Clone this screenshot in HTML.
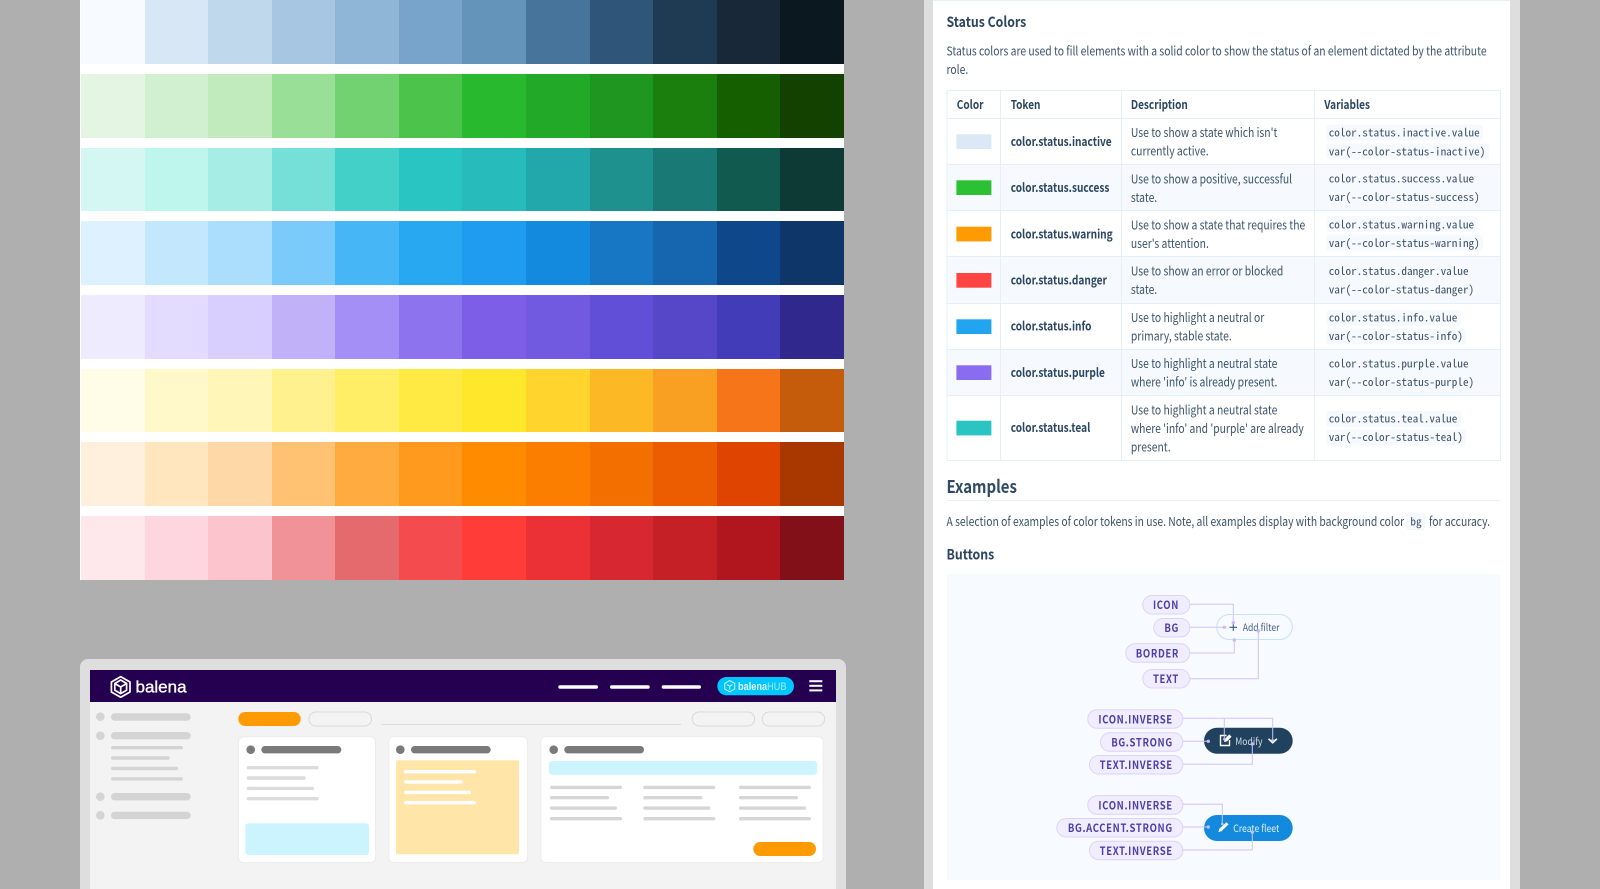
<!DOCTYPE html>
<html><head><meta charset="utf-8"><style>
html,body{margin:0;padding:0;width:1600px;height:889px;overflow:hidden;background:#b0afaf}
.r{position:absolute;left:81px;width:763px;height:63.6px;display:flex}
.r i{flex:1;display:block}
svg{position:absolute;left:0;top:0}
text{font-family:"Noto Sans CJK SC","Liberation Sans",sans-serif;fill:#3a536b;font-size:12.4px;transform-box:fill-box;transform-origin:0 50%;transform:scaleX(.835)}
.h{font-weight:700;font-size:12.2px;fill:#2a4560;transform:scaleX(.825)}
.t{font-weight:700;font-size:12.2px;fill:#2a4560;transform:scaleX(.83)}
.b{transform:scaleX(.855)}
.s{transform:scaleX(.865)}
.n{transform:none}
.c{font-family:"Noto Sans Mono CJK SC","Liberation Mono",monospace;font-size:11.2px;fill:#3c5269;transform:none}
.p{font-weight:700;font-size:11px;letter-spacing:.75px;fill:#4a3fa8;text-anchor:end;transform-origin:100% 50%;transform:scaleX(.865)}
.l{fill:none;stroke:#cfc2fb;stroke-width:1}
.pl{fill:#f1edff;stroke:#dcd2fb;stroke-width:1}
.d{fill:#c9b9fa}
.g{fill:#d4d4d4}.k{fill:#dcdcdc}.w{fill:#fff}.m{fill:#d6d6d6}.dk{fill:#7a7a7a}
</style></head><body>
<div style="position:absolute;left:80px;top:0;width:764px;height:580px;background:#fff"></div>
<div class="r" style="top:0"><i style="background:#f7fbff"></i><i style="background:#d8e7f5"></i><i style="background:#bfd8ec"></i><i style="background:#a6c6e1"></i><i style="background:#8fb5d7"></i><i style="background:#78a4cc"></i><i style="background:#6594ba"></i><i style="background:#47749a"></i><i style="background:#2f5578"></i><i style="background:#1f3b53"></i><i style="background:#182839"></i><i style="background:#0b1820"></i></div>
<div class="r" style="top:74px"><i style="background:#e4f6e3"></i><i style="background:#d0f0cf"></i><i style="background:#c1ebbd"></i><i style="background:#9adf98"></i><i style="background:#72d170"></i><i style="background:#4cc34b"></i><i style="background:#28b92f"></i><i style="background:#23a928"></i><i style="background:#1f961f"></i><i style="background:#1b7f0d"></i><i style="background:#155f00"></i><i style="background:#134200"></i></div>
<div class="r" style="top:147.6px"><i style="background:#d5f7f3"></i><i style="background:#bef5ed"></i><i style="background:#a6ede5"></i><i style="background:#75e0d7"></i><i style="background:#42d0c8"></i><i style="background:#29c5c3"></i><i style="background:#28bbbc"></i><i style="background:#22a8ab"></i><i style="background:#1e908e"></i><i style="background:#197a75"></i><i style="background:#115a50"></i><i style="background:#0e3a36"></i></div>
<div class="r" style="top:221.3px"><i style="background:#ddf1fe"></i><i style="background:#c3e8fd"></i><i style="background:#abdefc"></i><i style="background:#7acbfa"></i><i style="background:#47b6f6"></i><i style="background:#29a8f2"></i><i style="background:#1f9bef"></i><i style="background:#148ade"></i><i style="background:#1777c5"></i><i style="background:#1565af"></i><i style="background:#0f478b"></i><i style="background:#0e3668"></i></div>
<div class="r" style="top:295px"><i style="background:#efebff"></i><i style="background:#e3dcff"></i><i style="background:#d8cfff"></i><i style="background:#c0b1f9"></i><i style="background:#a38ff6"></i><i style="background:#8e73ef"></i><i style="background:#7d5fe7"></i><i style="background:#7159e0"></i><i style="background:#6150d7"></i><i style="background:#5547c8"></i><i style="background:#433cb8"></i><i style="background:#30288d"></i></div>
<div class="r" style="top:368.7px"><i style="background:#fffde7"></i><i style="background:#fff9c9"></i><i style="background:#fff6b8"></i><i style="background:#fff28e"></i><i style="background:#ffee66"></i><i style="background:#ffea44"></i><i style="background:#ffe82b"></i><i style="background:#ffd42c"></i><i style="background:#fcb925"></i><i style="background:#f99f22"></i><i style="background:#f67518"></i><i style="background:#c55c0c"></i></div>
<div class="r" style="top:442.4px"><i style="background:#fff0dd"></i><i style="background:#ffe6bf"></i><i style="background:#ffd8a8"></i><i style="background:#ffc273"></i><i style="background:#ffab40"></i><i style="background:#ff9a1f"></i><i style="background:#ff8c00"></i><i style="background:#fb7e00"></i><i style="background:#f36f00"></i><i style="background:#eb5d00"></i><i style="background:#df4400"></i><i style="background:#a93700"></i></div>
<div class="r" style="top:516px"><i style="background:#fee8eb"></i><i style="background:#fdd6df"></i><i style="background:#fcc5cd"></i><i style="background:#f19198"></i><i style="background:#e56a6d"></i><i style="background:#f44b4f"></i><i style="background:#ff3c38"></i><i style="background:#ec3136"></i><i style="background:#d72730"></i><i style="background:#c42026"></i><i style="background:#b1161f"></i><i style="background:#821019"></i></div>

<svg width="1600" height="889" viewBox="0 0 1600 889" xmlns="http://www.w3.org/2000/svg">
<!-- mockup frame -->
<path d="M80 889V667a8 8 0 0 1 8-8H838a8 8 0 0 1 8 8V889Z" fill="#dedede"/>
<rect x="90" y="670" width="746" height="219" fill="#f3f3f3"/>
<rect x="90" y="670" width="746" height="32" fill="#250050"/>
<!-- logo -->
<g fill="none" stroke="#fff" stroke-width="1.7" stroke-linejoin="round">
<path d="M120.7 676.6 130 682V692L120.7 697.2 111.4 692V682Z"/>
<path d="M120.7 680 126.6 683.5V690.2L120.7 693.6 114.8 690.2V683.5ZM114.8 683.5 120.7 687 126.6 683.5M120.7 687V693.6"/>
</g>
<text class="n" x="135.5" y="692.5" style="font-family:'Liberation Sans',sans-serif;font-size:17px;fill:#fff;font-weight:400;stroke:#fff;stroke-width:.35">balena</text>
<!-- nav -->
<rect x="558.3" y="685.3" width="39.7" height="3.4" rx="1.7" class="w"/>
<rect x="610" y="685.3" width="39.7" height="3.4" rx="1.7" class="w"/>
<rect x="661.7" y="685.3" width="39.3" height="3.4" rx="1.7" class="w"/>
<rect x="717.3" y="677" width="76.7" height="18.3" rx="9.15" fill="#00c6ff"/>
<g fill="none" stroke="#d9f6ff" stroke-width="1"><path d="M729.7 680.6 734.7 683.4V689L729.7 691.8 724.7 689V683.4ZM727 684.6 729.7 686.2 732.4 684.6M729.7 686.2V689.6"/></g>
<text x="738" y="690" style="font-family:'Liberation Sans',sans-serif;font-size:11px;fill:#e6faff;font-weight:700">balena<tspan style="font-weight:400;fill:#a8ecff">HUB</tspan></text>
<rect x="809.3" y="680.2" width="13" height="2" class="w"/><rect x="809.3" y="684.8" width="13" height="2" class="w"/><rect x="809.3" y="689.4" width="13" height="2" class="w"/>
<!-- sidebar -->
<circle cx="100.3" cy="716.7" r="4.3" class="g"/><rect x="111" y="713.3" width="79.7" height="7.4" rx="3.7" class="g"/>
<circle cx="100.3" cy="735.7" r="4.3" class="g"/><rect x="111" y="732" width="79.7" height="7.4" rx="3.7" class="g"/>
<rect x="111" y="746" width="72" height="3.4" rx="1.7" class="g"/><rect x="111" y="756.3" width="58.7" height="3.4" rx="1.7" class="g"/><rect x="111" y="766.7" width="67" height="3.4" rx="1.7" class="g"/><rect x="111" y="777.2" width="72" height="3.4" rx="1.7" class="g"/>
<circle cx="100.3" cy="796.7" r="4.3" class="g"/><rect x="111" y="793" width="79.7" height="7.4" rx="3.7" class="g"/>
<circle cx="100.3" cy="815.3" r="4.3" class="g"/><rect x="111" y="811.7" width="79.7" height="7.4" rx="3.7" class="g"/>
<!-- toolbar -->
<rect x="238.3" y="712" width="62.4" height="14" rx="7" fill="#ff9b00"/>
<rect x="308.9" y="712" width="62.6" height="14" rx="7" fill="#f3f3f3" stroke="#d8d8d8"/>
<rect x="382" y="724" width="299.3" height="1" fill="#dcdcdc"/>
<rect x="692.2" y="712" width="62.4" height="14" rx="7" fill="#f3f3f3" stroke="#d8d8d8"/>
<rect x="762.2" y="712" width="62.4" height="14" rx="7" fill="#f3f3f3" stroke="#d8d8d8"/>
<!-- card 1 -->
<rect x="238.5" y="736.8" width="137" height="125.8" rx="5" fill="#fff" stroke="#ececec"/>
<circle cx="250.7" cy="749.7" r="4.3" class="dk"/><rect x="261.3" y="746" width="80" height="7.4" rx="3.7" class="dk"/>
<rect x="246.7" y="766" width="72" height="3.4" rx="1.7" class="k"/><rect x="246.7" y="776.3" width="59" height="3.4" rx="1.7" class="k"/><rect x="246.7" y="786.7" width="67.3" height="3.4" rx="1.7" class="k"/><rect x="246.7" y="797" width="72" height="3.4" rx="1.7" class="k"/>
<rect x="245.3" y="823.3" width="123.7" height="31.7" rx="3" fill="#ccf4ff"/>
<!-- card 2 -->
<rect x="388.8" y="736.8" width="138.8" height="125.8" rx="5" fill="#fff" stroke="#ececec"/>
<circle cx="400.3" cy="749.7" r="4.3" class="dk"/><rect x="411" y="746" width="79.7" height="7.4" rx="3.7" class="dk"/>
<rect x="396" y="760.3" width="123" height="94" rx="2" fill="#ffe5a8"/>
<rect x="404" y="770" width="72" height="3.4" rx="1.7" class="w"/><rect x="404" y="780.3" width="58.7" height="3.4" rx="1.7" class="w"/><rect x="404" y="790.7" width="67" height="3.4" rx="1.7" class="w"/><rect x="404" y="801" width="72" height="3.4" rx="1.7" class="w"/>
<!-- card 3 -->
<rect x="540.8" y="736.8" width="282.4" height="125.8" rx="5" fill="#fff" stroke="#ececec"/>
<circle cx="553.7" cy="749.7" r="4.3" class="dk"/><rect x="564.3" y="746" width="79.7" height="7.4" rx="3.7" class="dk"/>
<rect x="549" y="761" width="268" height="13.7" rx="3" fill="#ccf4ff"/>
<rect x="550" y="785.7" width="72" height="3.4" rx="1.7" class="m"/><rect x="550" y="796" width="59" height="3.4" rx="1.7" class="m"/><rect x="550" y="806.4" width="67" height="3.4" rx="1.7" class="m"/><rect x="550" y="817" width="72" height="3.4" rx="1.7" class="m"/>
<rect x="643.3" y="785.7" width="72" height="3.4" rx="1.7" class="m"/><rect x="643.3" y="796" width="59" height="3.4" rx="1.7" class="m"/><rect x="643.3" y="806.4" width="67" height="3.4" rx="1.7" class="m"/><rect x="643.3" y="817" width="72" height="3.4" rx="1.7" class="m"/>
<rect x="739" y="785.7" width="72" height="3.4" rx="1.7" class="m"/><rect x="739" y="796" width="59" height="3.4" rx="1.7" class="m"/><rect x="739" y="806.4" width="67" height="3.4" rx="1.7" class="m"/><rect x="739" y="817" width="72" height="3.4" rx="1.7" class="m"/>
<rect x="753.3" y="842" width="62.7" height="14" rx="7" fill="#ff9b00"/>

<!-- right panel -->
<rect x="924" y="0" width="596" height="889" fill="#dedede"/>
<rect x="933" y="0" width="577" height="889" fill="#fff"/>
<rect x="933" y="0" width="577" height="1" fill="#e6f0f9"/>
<text class="b" x="946.5" y="27" style="font-weight:700;font-size:14.4px;fill:#2a4560">Status Colors</text>
<text x="946.5" y="55.5">Status colors are used to fill elements with a solid color to show the status of an element dictated by the attribute</text>
<text x="946.5" y="74">role.</text>

<!-- table -->
<rect x="947" y="164.3" width="553.5" height="46.4" fill="#f6f9fd"/>
<rect x="947" y="256" width="553.5" height="47.3" fill="#f6f9fd"/>
<rect x="947" y="349.3" width="553.5" height="46.4" fill="#f6f9fd"/>
<g fill="#e5eff8">
<rect x="947" y="90" width="554" height="1"/><rect x="947" y="118" width="554" height="1"/><rect x="947" y="164" width="554" height="1"/><rect x="947" y="210" width="554" height="1"/><rect x="947" y="256" width="554" height="1"/><rect x="947" y="303" width="554" height="1"/><rect x="947" y="349" width="554" height="1"/><rect x="947" y="395" width="554" height="1"/><rect x="947" y="460" width="554" height="1"/>
<rect x="946.5" y="90" width="1" height="371"/><rect x="1000" y="90" width="1" height="371"/><rect x="1121" y="90" width="1" height="371"/><rect x="1314" y="90" width="1" height="371"/><rect x="1500" y="90" width="1" height="371"/>
</g>
<text class="h" x="956.8" y="109">Color</text><text class="h" x="1010.7" y="109">Token</text><text class="h" x="1130.9" y="109">Description</text><text class="h" x="1324.5" y="109">Variables</text>

<rect x="956.4" y="134.3" width="35" height="14.7" fill="#dce8f5"/>
<rect x="956.4" y="180.3" width="35" height="14.7" fill="#2cc134"/>
<rect x="956.4" y="226.7" width="35" height="14.7" fill="#ff9b00"/>
<rect x="956.4" y="273" width="35" height="14.7" fill="#ff4541"/>
<rect x="956.4" y="319.3" width="35" height="14.7" fill="#22a5f1"/>
<rect x="956.4" y="365.3" width="35" height="14.7" fill="#8a6cf0"/>
<rect x="956.4" y="420.7" width="35" height="14.7" fill="#2ac5c3"/>

<text class="t" x="1010.7" y="146">color.status.inactive</text>
<text class="t" x="1010.7" y="192">color.status.success</text>
<text class="t" x="1010.7" y="238.5">color.status.warning</text>
<text class="t" x="1010.7" y="284.5">color.status.danger</text>
<text class="t" x="1010.7" y="330.5">color.status.info</text>
<text class="t" x="1010.7" y="377">color.status.purple</text>
<text class="t" x="1010.7" y="432">color.status.teal</text>

<text x="1130.9" y="137">Use to show a state which isn't</text><text x="1130.9" y="155.5">currently active.</text>
<text x="1130.9" y="183.5">Use to show a positive, successful</text><text x="1130.9" y="202">state.</text>
<text x="1130.9" y="229.5">Use to show a state that requires the</text><text x="1130.9" y="248">user's attention.</text>
<text x="1130.9" y="275.5">Use to show an error or blocked</text><text x="1130.9" y="294">state.</text>
<text x="1130.9" y="322">Use to highlight a neutral or</text><text x="1130.9" y="340.5">primary, stable state.</text>
<text x="1130.9" y="368">Use to highlight a neutral state</text><text x="1130.9" y="386.5">where 'info' is already present.</text>
<text x="1130.9" y="414.5">Use to highlight a neutral state</text><text x="1130.9" y="433">where 'info' and 'purple' are already</text><text x="1130.9" y="451.5">present.</text>

<g fill="#f6f9fd">
<rect x="1326" y="124.7" width="157" height="16" rx="3"/><rect x="1326" y="143.4" width="163" height="16" rx="3"/>
<rect x="1326" y="216" width="152" height="16" rx="3"/><rect x="1326" y="234.5" width="157" height="16" rx="3"/>
<rect x="1326" y="310" width="135" height="16" rx="3"/><rect x="1326" y="328.5" width="140" height="16" rx="3"/>
<rect x="1326" y="411" width="135" height="16" rx="3"/><rect x="1326" y="429.5" width="140" height="16" rx="3"/>
</g>
<text class="c" x="1328.7" y="136.7">color.status.inactive.value</text><text class="c" x="1328.7" y="155.3">var(--color-status-inactive)</text>
<text class="c" x="1328.7" y="182.7">color.status.success.value</text><text class="c" x="1328.7" y="201.2">var(--color-status-success)</text>
<text class="c" x="1328.7" y="228.7">color.status.warning.value</text><text class="c" x="1328.7" y="247.2">var(--color-status-warning)</text>
<text class="c" x="1328.7" y="275.2">color.status.danger.value</text><text class="c" x="1328.7" y="293.7">var(--color-status-danger)</text>
<text class="c" x="1328.7" y="321.7">color.status.info.value</text><text class="c" x="1328.7" y="339.8">var(--color-status-info)</text>
<text class="c" x="1328.7" y="367.7">color.status.purple.value</text><text class="c" x="1328.7" y="386.2">var(--color-status-purple)</text>
<text class="c" x="1328.7" y="422.7">color.status.teal.value</text><text class="c" x="1328.7" y="441.2">var(--color-status-teal)</text>

<text class="b" x="946.5" y="492.8" style="font-weight:700;font-size:17.5px;fill:#2f4a63">Examples</text>
<rect x="947" y="500" width="553.5" height="1" fill="#e8f1fa"/>
<text x="946.5" y="526">A selection of examples of color tokens in use. Note, all examples display with background color</text>
<rect x="1406.8" y="513" width="18.2" height="16.7" rx="3" fill="#f6f9fd" stroke="#eef3f9" stroke-width=".6"/>
<text class="c" x="1410.4" y="525.5">bg</text>
<text x="1429" y="526">for accuracy.</text>
<text class="b" x="946.5" y="559.5" style="font-weight:700;font-size:14.4px;fill:#2a4560">Buttons</text>
<rect x="947" y="574" width="553.5" height="306.3" fill="#f7fbff"/>

<!-- diagram connectors -->
<path class="l" d="M1190 604.3H1233.3V622.7M1190 627.3H1224.3M1190 653H1234.3V640M1190 678.7H1258.3V631"/>
<rect x="1216.8" y="614.5" width="75.5" height="25" rx="12.5" fill="none" stroke="#c8e0f5"/>
<path d="M1229.5 627.3H1237M1233.3 623.5V631" stroke="#3f5a75" stroke-width="1.1" fill="none"/>
<text class="s" x="1242.7" y="630.8" style="font-size:10px;fill:#47607a">Add filter</text>
<circle cx="1233.3" cy="622.7" r="1.7" class="d"/><circle cx="1224.3" cy="627.3" r="1.7" class="d"/><circle cx="1234.3" cy="640" r="1.7" class="d"/><circle cx="1258.3" cy="631" r="1.7" class="d"/>
<rect x="1142.8" y="595.5" width="47" height="18.5" rx="9.2" class="pl"/><text class="p" x="1179" y="609">ICON</text>
<rect x="1153.8" y="618.5" width="36" height="18.5" rx="9.2" class="pl"/><text class="p" x="1179" y="632">BG</text>
<rect x="1125.8" y="643.8" width="64" height="18.5" rx="9.2" class="pl"/><text class="p" x="1179" y="657.5">BORDER</text>
<rect x="1142.8" y="669.5" width="47" height="18.5" rx="9.2" class="pl"/><text class="p" x="1179" y="683.2">TEXT</text>

<rect x="1204" y="727.7" width="88.7" height="26" rx="13" fill="#21425f"/>
<g fill="none" stroke="#fff" stroke-width="1.4"><path d="M1226.5 735.5H1220.5V745.5H1229.5V740"/></g>
<path d="M1224 742 1224.6 739 1229.3 734.4 1231.6 736.7 1227 741.4Z" fill="#fff"/>
<text class="s" x="1235.3" y="744.8" style="font-size:10px;fill:#d5dfe8">Modify</text>
<path d="M1268.5 738.8 1272.7 742.8 1276.9 738.8" fill="none" stroke="#fff" stroke-width="1.6"/>
<path class="l" d="M1183 718.3H1272.7V740.7M1224.3 718.3V739.3M1183 741.3H1208.3M1183 764.3H1252.3V744"/>
<path d="M1270.5 739.5H1275L1272.7 742.5Z" class="d"/>
<circle cx="1224.3" cy="739.3" r="1.3" class="d"/><circle cx="1208.3" cy="741.3" r="1.7" class="d"/><circle cx="1252.3" cy="744" r="1.7" class="d"/>
<rect x="1087.8" y="709.8" width="95" height="18.5" rx="9.2" class="pl"/><text class="p" x="1172.8" y="723.5">ICON.INVERSE</text>
<rect x="1100.5" y="732.8" width="82.3" height="18.5" rx="9.2" class="pl"/><text class="p" x="1172.8" y="746.5">BG.STRONG</text>
<rect x="1089.5" y="755.5" width="93.3" height="18.5" rx="9.2" class="pl"/><text class="p" x="1172.8" y="769.2">TEXT.INVERSE</text>

<rect x="1204" y="815" width="88.7" height="26" rx="13" fill="#148ade"/>
<path d="M1218.4 832 1219.2 829 1226.4 822.2 1228.6 824.4 1221.4 831.2Z" fill="#fff"/>
<text class="s" x="1233.3" y="832" style="font-size:10px;fill:#dff0fb">Create fleet</text>
<path class="l" d="M1183 804.3H1222.3V824M1183 827H1208.3M1183 850H1252.3V832.3"/>
<circle cx="1222.3" cy="824" r="1.3" class="d"/><circle cx="1208.3" cy="827" r="1.7" class="d"/><circle cx="1252.3" cy="832.3" r="1.7" class="d"/>
<rect x="1087.8" y="795.8" width="95" height="18.5" rx="9.2" class="pl"/><text class="p" x="1172.8" y="809.5">ICON.INVERSE</text>
<rect x="1056.8" y="818.5" width="126" height="18.5" rx="9.2" class="pl"/><text class="p" x="1172.8" y="832.2">BG.ACCENT.STRONG</text>
<rect x="1089.5" y="841.2" width="93.3" height="18.5" rx="9.2" class="pl"/><text class="p" x="1172.8" y="855">TEXT.INVERSE</text>
</svg>
</body></html>
